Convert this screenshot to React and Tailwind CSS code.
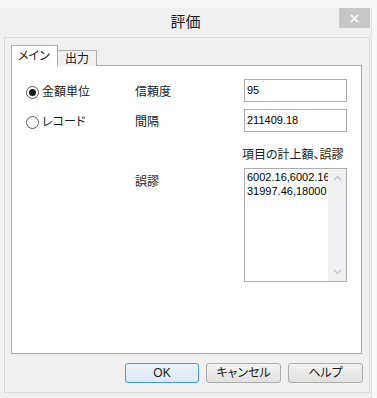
import React from "react";

const font = "font-['Liberation_Sans','Noto_Sans_CJK_JP',sans-serif] [font-feature-settings:'palt']";

function Radio({ checked, label }) {
  return (
    <div className="flex items-center w-[109px] h-[23px] pt-[3px]">
      <span className="w-[13px] h-[13px] rounded-full border border-[#5a5a5a] bg-white flex items-center justify-center">
        {checked && <span className="w-[7px] h-[7px] rounded-full bg-[#1a1a1a]" />}
      </span>
      <span className="ml-[3px] text-[12px] leading-[14px] text-[#1a1a1a]">{label}</span>
    </div>
  );
}

function Label({ children }) {
  return <div className="w-[109px] h-[23px] pt-[3px] flex items-center text-[12px] leading-[14px] text-[#1a1a1a]">{children}</div>;
}

function Input({ value }) {
  return (
    <div className="w-[103px] h-[23px] border border-[#abadb3] bg-white flex items-center pl-[2px] text-[11px] text-black">
      {value}
    </div>
  );
}

function Button({ children, def }) {
  return (
    <div
      className={
        "h-[20px] rounded-[3px] border flex items-center justify-center text-[12px] leading-none text-[#1a1a1a] " +
        (def
          ? "w-[74px] border-[#3c9ae6] bg-gradient-to-b from-[#eaf3fb] to-[#dce8f3]"
          : "w-[75px] border-[#acacac] bg-gradient-to-b from-[#f2f2f2] to-[#e0e0e0]")
      }
    >
      {children}
    </div>
  );
}

export default function App() {
  return (
    <div className={"w-[377px] h-[398px] bg-[#f7f7f7] pt-[8px] overflow-hidden " + font}>
      <div className="w-[372px] h-[390px] bg-[#f0f0f0] border-r border-[#e3e3e3] flex flex-col">
        {/* title bar */}
        <div className="relative h-[29px] flex items-start justify-center">
          <div className="pt-[4px] text-[15px] leading-[20px] text-[#1a1a1a]">評価</div>
          <div className="absolute right-[1px] top-0 w-[31px] h-[20px] bg-[#c7c7c7] flex items-center justify-center">
            <svg width="9" height="9" viewBox="0 0 9 9">
              <path d="M1 1 L8 8 M8 1 L1 8" stroke="white" strokeWidth="1.6" />
            </svg>
          </div>
        </div>
        {/* group box */}
        <div className="ml-[4px] w-[366px] h-[356px] border border-[#dadada] flex flex-col">
          {/* tabs */}
          <div className="flex items-end pl-[6px] pt-[7px] h-[28px] relative z-10">
            <div className="w-[47px] h-[21px] bg-white border border-[#acacac] border-b-0 flex items-start pl-[6px] pt-[3px] text-[12px] leading-[14px] text-[#1a1a1a]">
              メイン
            </div>
            <div className="w-[39px] h-[16px] bg-[#f0f0f0] border border-[#acacac] border-l-0 border-b-0 flex items-start justify-center pt-[1px] text-[12px] leading-[14px] text-[#1a1a1a]">
              出力
            </div>
          </div>
          {/* panel */}
          <div className="ml-[6px] mt-[-1px] w-[351px] h-[289px] bg-white border border-[#acacac] pl-[14px] pt-[13px]">
            <div className="flex">
              <Radio checked label="金額単位" />
              <Label>信頼度</Label>
              <Input value="95" />
            </div>
            <div className="flex mt-[7px]">
              <Radio label="レコード" />
              <Label>間隔</Label>
              <Input value="211409.18" />
            </div>
            <div className="flex mt-[15px] h-[16px]">
              <div className="w-[217px]" />
              <div className="text-[12px] leading-[16px] text-[#1a1a1a] whitespace-nowrap ml-[-1px]">項目の計上額、誤謬</div>
            </div>
            <div className="flex mt-[5px]">
              <div className="w-[109px]" />
              <div className="w-[109px] pt-[7px] text-[12px] leading-[14px] text-[#1a1a1a]">誤謬</div>
              <div className="w-[103px] h-[114px] border border-[#abadb3] bg-white flex">
                <div className="flex-1 overflow-hidden pl-[2px] pt-[1px] text-[11px] leading-[14px] text-black whitespace-nowrap">
                  <div>6002.16,6002.16</div>
                  <div>31997.46,18000</div>
                </div>
                <div className="w-[18px] bg-[#f0f0f0] flex flex-col justify-between items-center py-[6px]">
                  <svg width="9" height="6" viewBox="0 0 9 6">
                    <path d="M1 5 L4.5 1.5 L8 5" stroke="#c2c2c2" strokeWidth="1.2" fill="none" />
                  </svg>
                  <svg width="9" height="6" viewBox="0 0 9 6">
                    <path d="M1 1 L4.5 4.5 L8 1" stroke="#c2c2c2" strokeWidth="1.2" fill="none" />
                  </svg>
                </div>
              </div>
            </div>
          </div>
          {/* buttons */}
          <div className="flex justify-end gap-[7px] pr-[6px] mt-[9px]">
            <Button def>OK</Button>
            <Button>キャンセル</Button>
            <Button>ヘルプ</Button>
          </div>
        </div>
      </div>
    </div>
  );
}
